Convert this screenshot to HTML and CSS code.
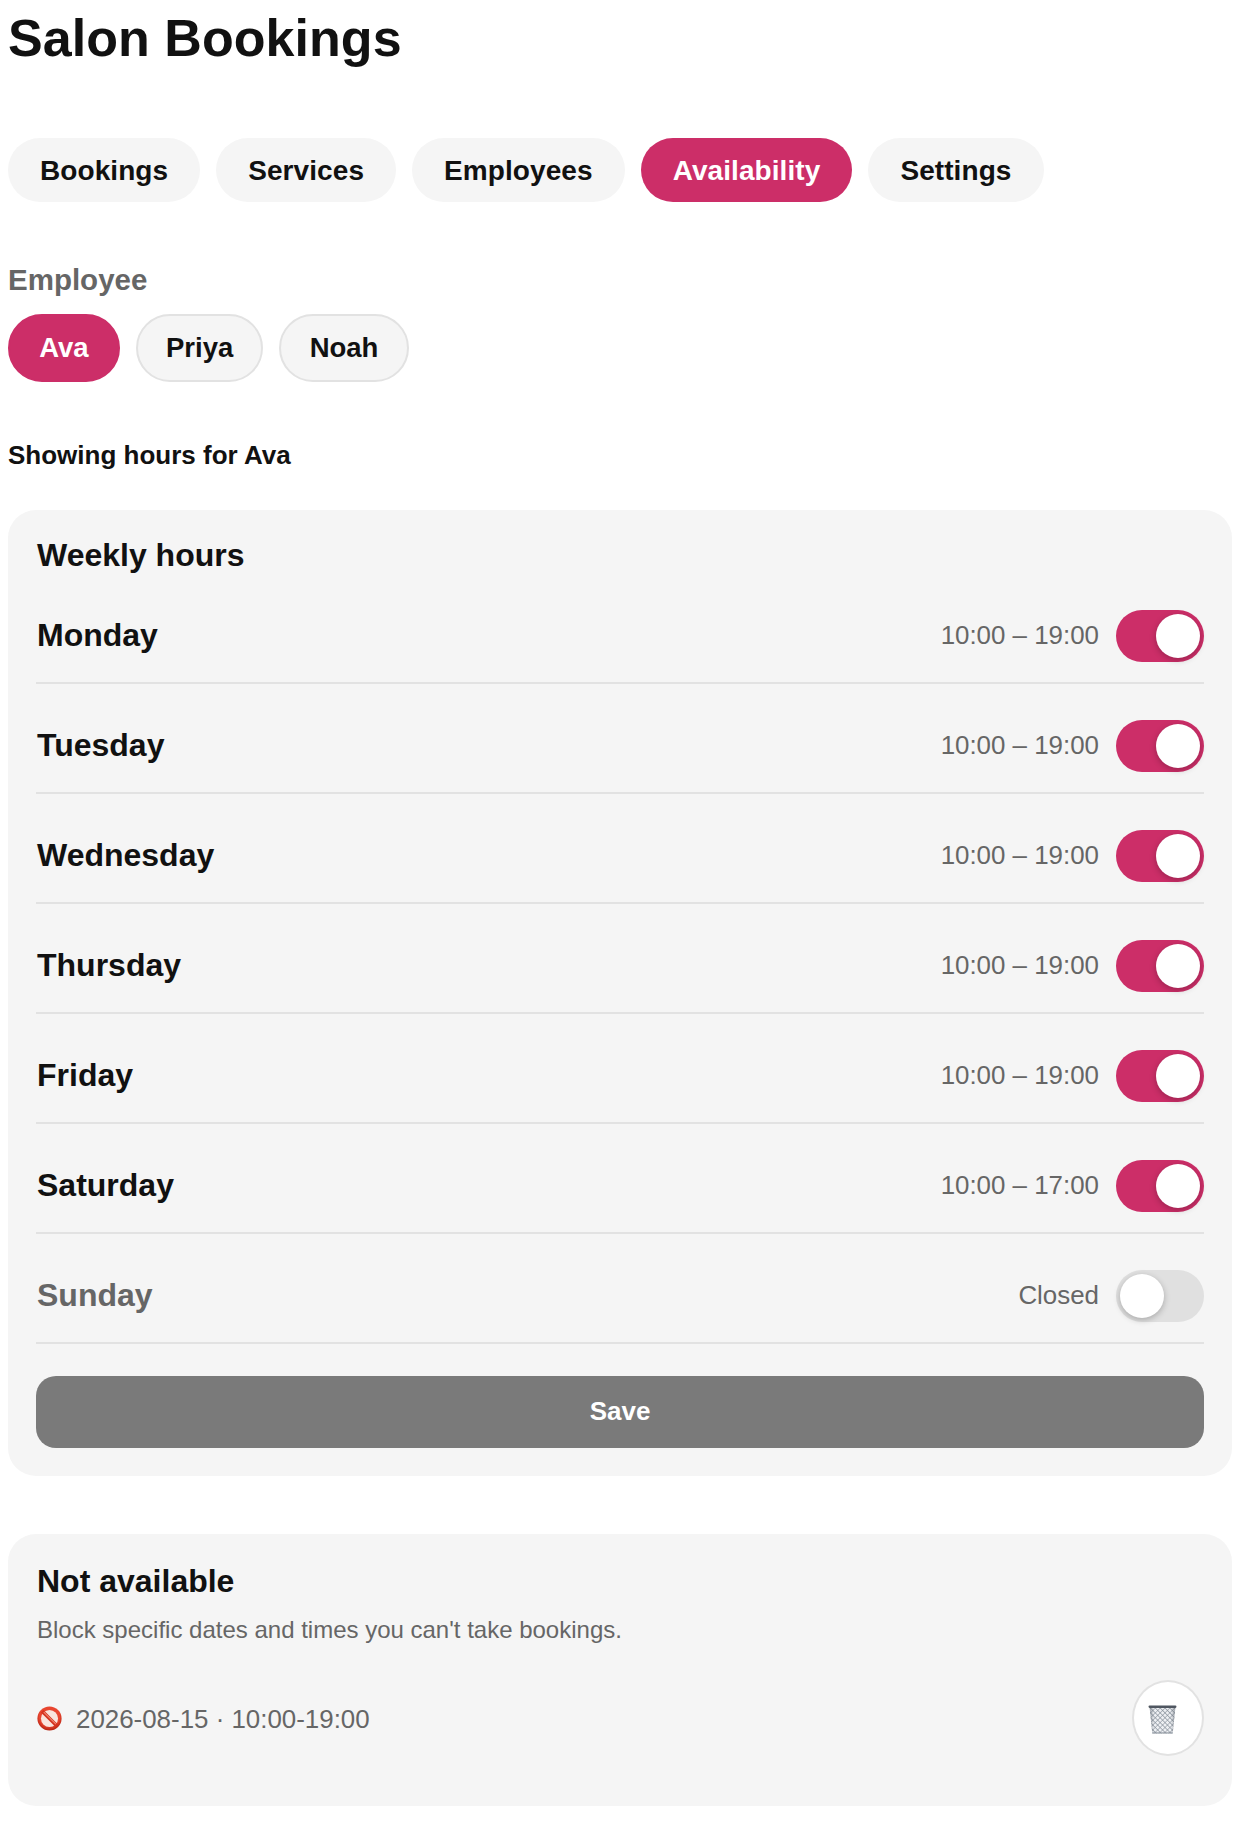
FILE: index.html
```html
<!DOCTYPE html>
<html lang="en">
<head>
<meta charset="utf-8">
<title>Salon Bookings</title>
<link rel="stylesheet" href="styles.css">
</head>
<body>
<h1 class="title">Salon Bookings</h1>
<nav class="tabs">
  <a class="tab">Bookings</a>
  <a class="tab">Services</a>
  <a class="tab">Employees</a>
  <a class="tab tab-active">Availability</a>
  <a class="tab">Settings</a>
</nav>
<div class="field-label">Employee</div>
<div class="chips">
  <button class="chip chip-active">Ava</button>
  <button class="chip">Priya</button>
  <button class="chip">Noah</button>
</div>
<p class="showing">Showing hours for Ava</p>
<section class="card hours-card">
  <h2 class="card-title">Weekly hours</h2>
  <div class="row"><span class="day">Monday</span><span class="hours">10:00 – 19:00</span><span class="toggle toggle-on"><span class="knob"></span></span></div>
  <div class="row"><span class="day">Tuesday</span><span class="hours">10:00 – 19:00</span><span class="toggle toggle-on"><span class="knob"></span></span></div>
  <div class="row"><span class="day">Wednesday</span><span class="hours">10:00 – 19:00</span><span class="toggle toggle-on"><span class="knob"></span></span></div>
  <div class="row"><span class="day">Thursday</span><span class="hours">10:00 – 19:00</span><span class="toggle toggle-on"><span class="knob"></span></span></div>
  <div class="row"><span class="day">Friday</span><span class="hours">10:00 – 19:00</span><span class="toggle toggle-on"><span class="knob"></span></span></div>
  <div class="row"><span class="day">Saturday</span><span class="hours">10:00 – 17:00</span><span class="toggle toggle-on"><span class="knob"></span></span></div>
  <div class="row"><span class="day day-off">Sunday</span><span class="hours">Closed</span><span class="toggle"><span class="knob"></span></span></div>
  <button class="save">Save</button>
</section>
<section class="card block-card">
  <h2 class="block-title">Not available</h2>
  <p class="hint">Block specific dates and times you can't take bookings.</p>
  <div class="block-row">
    <svg class="no-icon" viewBox="0 0 24 24" aria-hidden="true">
      <defs>
        <radialGradient id="ring" cx="50%" cy="40%" r="60%"><stop offset="70%" stop-color="#e8452f"/><stop offset="100%" stop-color="#b3200f"/></radialGradient>
      </defs>
      <circle cx="12" cy="12" r="11.6" fill="url(#ring)"/>
      <circle cx="12" cy="12" r="8.2" fill="#f9e4dd"/>
      <path d="M5 5 19 19" stroke="#d4321f" stroke-width="3.4"/>
      <path d="M6.5 5.8 18.2 17.5" stroke="#f08a75" stroke-width="1"/>
    </svg>
    <span class="block-text">2026-08-15 · 10:00-19:00</span>
    <button class="trash-btn" aria-label="Delete">
      <svg class="trash-icon" viewBox="0 0 27 27" aria-hidden="true">
        <defs>
          <pattern id="mesh" width="3.2" height="3.2" patternUnits="userSpaceOnUse" patternTransform="rotate(45)">
            <rect width="3.2" height="3.2" fill="#eef0f3"/>
            <path d="M0 0H3.2M0 0V3.2" stroke="#838c97" stroke-width="1"/>
          </pattern>
          <linearGradient id="shade" x1="0" x2="1" y1="0" y2="0">
            <stop offset="0" stop-color="#5b636e" stop-opacity=".55"/>
            <stop offset=".18" stop-color="#5b636e" stop-opacity="0"/>
            <stop offset=".82" stop-color="#5b636e" stop-opacity="0"/>
            <stop offset="1" stop-color="#5b636e" stop-opacity=".55"/>
          </linearGradient>
        </defs>
        <path d="M1.5 2H25.5L23 26.5H4Z" fill="url(#mesh)"/>
        <path d="M1.5 2H25.5L23 26.5H4Z" fill="url(#shade)"/>
        <path d="M4 25.5H23V26.5H4Z" fill="#8b939d"/>
        <rect x="0.5" y="0.5" width="26" height="2.2" rx="1" fill="#4f5660"/>
      </svg>
    </button>
  </div>
</section>
</body>
</html>
```
FILE: styles.css
```css
* { box-sizing: border-box; }
html, body { background: #fff; }
body {
  margin: 0;
  padding: 0 8px;
  font-family: "Liberation Sans", Arial, sans-serif;
  color: #111;
}
.title {
  margin: 0;
  padding-top: 8px;
  font-size: 52px;
  line-height: 60px;
  font-weight: 700;
  letter-spacing: .05px;
}
.tabs { display: flex; gap: 16px; margin-top: 70px; }
.tab {
  display: flex;
  align-items: center;
  height: 64px;
  padding: 2px 32px 0;
  border-radius: 32px;
  background: #f5f5f5;
  font-size: 28px;
  font-weight: 700;
  letter-spacing: .08px;
}
.tab-active { background: #cc2e68; color: #fff; }
.field-label {
  margin-top: 58px;
  font-size: 29.5px;
  line-height: 40px;
  font-weight: 700;
  color: #666;
}
.chips { display: flex; gap: 16px; margin-top: 14px; }
.chip {
  height: 68px;
  padding: 0 28.2px;
  border: 2px solid #e2e2e2;
  border-radius: 34px;
  background: #f5f5f5;
  color: #111;
  font: 700 27.5px "Liberation Sans", Arial, sans-serif;
}
.chip-active { background: #cc2e68; border-color: #cc2e68; color: #fff; padding: 0 29.2px; }
.showing { margin: 55px 0 0; font-size: 26px; line-height: 36px; font-weight: 700; }
.card { background: #f5f5f5; border-radius: 28px; padding: 28px; }
.hours-card { margin-top: 37px; }
.card-title { margin: 0; padding: 0 0 2px 1px; font-size: 32px; line-height: 34px; font-weight: 700; }
.block-title { margin: 0; padding-left: 1px; font-size: 32px; line-height: 38px; font-weight: 700; }
.row {
  display: flex;
  align-items: center;
  padding: 36px 0 20px;
  border-bottom: 2px solid #e2e2e2;
}
.day { margin-right: auto; padding: 0 0 2px 1px; font-size: 32px; font-weight: 700; }
.day-off { color: #666; }
.hours { margin-right: 17px; padding-bottom: 2px; font-size: 25.9px; color: #666; }
.toggle {
  display: flex;
  justify-content: flex-start;
  align-items: center;
  width: 88px;
  height: 52px;
  padding: 4px;
  border-radius: 26px;
  background: #e0e0e0;
}
.toggle-on { background: #cc2e68; justify-content: flex-end; }
.knob {
  width: 44px;
  height: 44px;
  border-radius: 50%;
  background: #fff;
  box-shadow: 0 2px 6px rgba(0,0,0,.25);
}
.save {
  display: block;
  width: 100%;
  height: 72px;
  margin-top: 32px;
  padding: 0 0 2px;
  border: 0;
  border-radius: 20px;
  background: #7a7a7a;
  color: #fff;
  font: 700 26px "Liberation Sans", Arial, sans-serif;
}
.block-card { margin-top: 58px; }
.hint { margin: 12px 0 0; padding-left: 1px; font-size: 24px; line-height: 36px; color: #666; }
.block-row { display: flex; align-items: center; gap: 14px; margin: 32px 0 22px; }
.no-icon { width: 25px; height: 25px; margin-left: 1px; }
.block-text { margin-right: auto; padding-top: 2px; font-size: 25.9px; color: #666; }
.trash-btn {
  display: flex;
  align-items: center;
  justify-content: center;
  width: 72px;
  height: 76px;
  padding: 0;
  border: 2px solid #e2e2e2;
  border-radius: 50%;
  background: #fff;
}
.trash-icon { width: 29px; height: 29px; margin: 2px 12px 0 0; }
```
